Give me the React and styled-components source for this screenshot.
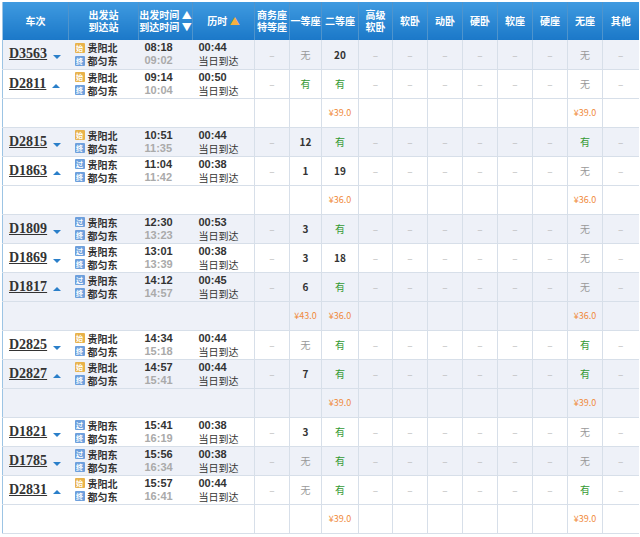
import React from "react";
import styled, { createGlobalStyle } from "styled-components";

const G = createGlobalStyle`
  body{margin:0;background:#fff;font-family:"Noto Sans CJK SC","Liberation Sans",sans-serif;}
`;
const Wrap = styled.div`padding:2px 2px 0 2px;`;
const Table = styled.table`
  width:636px;table-layout:fixed;border-collapse:collapse;font-size:10px;color:#333;
  border-left:1px solid #9cc4e4;
`;
const Th = styled.th`
  height:38px;padding:0;color:#fff;font-weight:bold;font-size:10px;line-height:12px;
  background:linear-gradient(#3f9ae0,#1b78c8);border-right:1px solid #4f94cc;text-align:center;
  &:last-child{border-right:none;}
`;
const Tr = styled.tr`background:${p=>p.$alt?"#eef1f8":"#fff"};height:29px;border-bottom:1px solid #d7dfe9;`;
const Td = styled.td`
  padding:0;text-align:center;vertical-align:middle;
  border-left:${p=>p.$line?"1px solid #d7dfe9":"none"};
  color:${p=>p.$c||"#333"};font-weight:${p=>p.$b?"bold":"normal"};font-size:${p=>p.$fs||10}px;
`;
const TrainNo = styled.div`display:flex;align-items:center;padding-left:6px;gap:6px;`;
const No = styled.span`font-family:"Liberation Serif",serif;font-weight:bold;font-size:14px;text-decoration:underline;color:#333;`;
const Arrow = styled.span`width:0;height:0;border-left:4px solid transparent;border-right:4px solid transparent;
  ${p=>p.$up?"border-bottom:4px solid #2a7fc9;margin-top:4px;":"border-top:4px solid #2a7fc9;margin-top:6px;"}`;
const Stack = styled.div`display:flex;flex-direction:column;align-items:flex-start;line-height:13px;padding-left:${p=>p.$pl||0}px;`;
const St = styled.div`display:flex;align-items:center;gap:3px;font-weight:bold;font-size:10px;`;
const Tag = styled.span`width:10px;height:10px;font-size:7px;line-height:10px;color:#fff;text-align:center;border-radius:1px;
  background:${p=>p.$o?"#e8b24a":"#6d9fdc"};`;
const Time = styled.span`font-family:"Liberation Sans",sans-serif;font-weight:bold;font-size:11px;color:${p=>p.$g?"#aaa":"#333"};`;
const Small = styled.span`font-size:10px;`;

const D = "–";
const trains = [
  ["D3563",0,1,"08:18","09:02","00:44",[D,"无","20"],"无",null],
  ["D2811",1,1,"09:14","10:04","00:50",[D,"有","有"],"无",[null,"¥39.0","¥39.0"]],
  ["D2815",0,1,"10:51","11:35","00:44",[D,"12","有"],"有",null],
  ["D1863",1,0,"11:04","11:42","00:38",[D,"1","19"],"无",[null,"¥36.0","¥36.0"]],
  ["D1809",0,0,"12:30","13:23","00:53",[D,"3","有"],"无",null],
  ["D1869",0,0,"13:01","13:39","00:38",[D,"3","18"],"无",null],
  ["D1817",1,0,"14:12","14:57","00:45",[D,"6","有"],"无",["¥43.0","¥36.0","¥36.0"]],
  ["D2825",0,1,"14:34","15:18","00:44",[D,"无","有"],"有",null],
  ["D2827",1,1,"14:57","15:41","00:44",[D,"7","有"],"有",[null,"¥39.0","¥39.0"]],
  ["D1821",0,0,"15:41","16:19","00:38",[D,"3","有"],"无",null],
  ["D1785",0,0,"15:56","16:34","00:38",[D,"无","有"],"无",null],
  ["D2831",1,1,"15:57","16:41","00:44",[D,"无","有"],"有",[null,"¥39.0","¥39.0"]],
];
const widths=[66,70,54,62,35,32,37,34,35,35,35,35,35,35,36];
const heads=["车次",<>出发站<br/>到达站</>,<>出发时间 ▲<br/>到达时间 ▼</>,<>历时 <span style={{color:"#f5b040"}}>▲</span></>,<>商务座<br/>特等座</>,"一等座","二等座",<>高级<br/>软卧</>,"软卧","动卧","硬卧","软座","硬座","无座","其他"];
const col=v=>v==="有"?"#339933":v==="无"?"#999":v===D?"#bbb":"#333";

export default function App(){
  const rows=[];
  trains.forEach((t,i)=>{
    const alt=i%2===0;
    const [no,up,north,dep,arr,dur,seats,wz,price]=t;
    rows.push(
      <Tr key={no} $alt={alt}>
        <Td><TrainNo><No>{no}</No><Arrow $up={up}/></TrainNo></Td>
        <Td><Stack $pl={6}><St><Tag $o={north}>{north?"始":"过"}</Tag>{north?"贵阳北":"贵阳东"}</St><St><Tag>终</Tag>都匀东</St></Stack></Td>
        <Td><Stack $pl={6}><Time>{dep}</Time><Time $g>{arr}</Time></Stack></Td>
        <Td><Stack $pl={6}><Time>{dur}</Time><Small>当日到达</Small></Stack></Td>
        {seats.map((s,k)=><Td key={k} $line $c={col(s)} $b={/\d/.test(s)}>{s}</Td>)}
        {[0,1,2,3,4,5].map(k=><Td key={"x"+k} $line $c="#bbb">{D}</Td>)}
        <Td $line $c={col(wz)}>{wz}</Td>
        <Td $line $c="#bbb">{D}</Td>
      </Tr>
    );
    if(price) rows.push(
      <Tr key={no+"p"} $alt={alt}>
        <Td colSpan={4}/>
        <Td $line/>
        {price.slice(0,2).map((p,k)=><Td key={k} $line $c="#f08a3c" $fs={9}>{p}</Td>)}
        {[0,1,2,3,4,5].map(k=><Td key={"y"+k} $line/>)}
        <Td $line $c="#f08a3c" $fs={9}>{price[2]}</Td>
        <Td $line/>
      </Tr>
    );
  });
  return <Wrap><G/>
    <Table>
      <colgroup>{widths.map((w,i)=><col key={i} style={{width:w}}/>)}</colgroup>
      <thead><tr>{heads.map((h,i)=><Th key={i}>{h}</Th>)}</tr></thead>
      <tbody>{rows}</tbody>
    </Table>
  </Wrap>;
}
